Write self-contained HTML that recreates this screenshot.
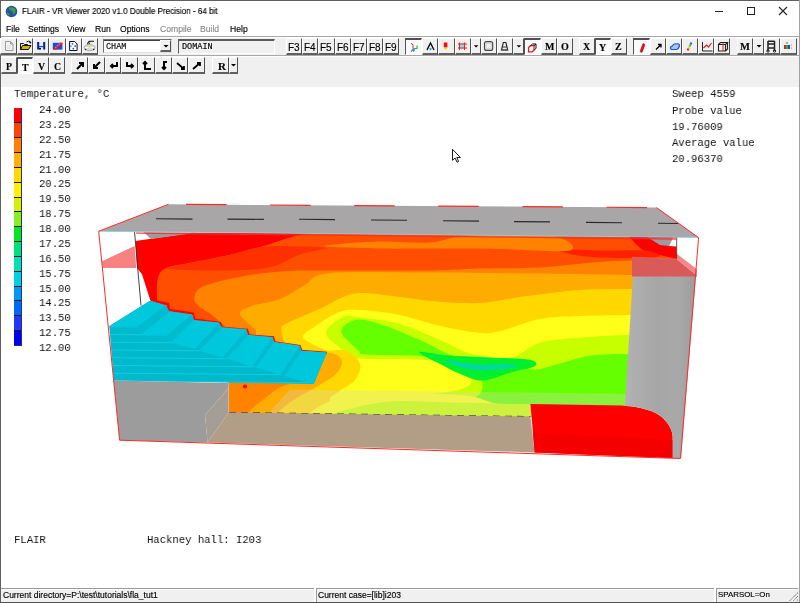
<!DOCTYPE html><html><head><meta charset="utf-8"><style>
*{margin:0;padding:0;box-sizing:border-box}
html,body{width:800px;height:603px;overflow:hidden;background:#fff}
body{position:relative;font-family:"Liberation Sans",sans-serif;font-size:8px;color:#000;-webkit-font-smoothing:antialiased}
.t,.m{will-change:transform}
.t{-webkit-text-stroke:.15px currentColor}
.a{position:absolute}
.t{position:absolute;white-space:pre;line-height:1}
.m{position:absolute;white-space:pre;font-family:"Liberation Mono",monospace;font-size:11.4px;line-height:1;color:#111;transform:scaleX(.93);transform-origin:0 0}
.b{position:absolute;background:#f0f0f0;border-left:1px solid #fff;border-top:1px solid #fff;border-right:1px solid #505050;border-bottom:2px solid #606060}
.bp{position:absolute;background:#fafafa;border-left:1px solid #505050;border-top:2px solid #505050;border-right:1px solid #fff;border-bottom:1px solid #fff}
.b svg,.bp svg{position:absolute;left:0;top:0}
.sf{font-family:"Liberation Serif",serif;font-weight:bold;font-size:10px}
</style></head><body>
<div class="a" style="left:0;top:0;width:800px;height:1px;background:#606060"></div>
<div class="a" style="left:0;top:0;width:1px;height:603px;background:#606060"></div>
<div class="a" style="left:799px;top:0;width:1px;height:603px;background:#a0a0a0"></div>
<svg class="a" style="left:5px;top:5px" width="13" height="13" viewBox="0 0 13 13"><circle cx="6.5" cy="6.5" r="5.8" fill="#2a4fa8"/><path d="M4 2.5 Q8 1.5 10.5 4 Q11 7 9 9.5 Q7 8 7.5 6 Q5 6 4 4Z" fill="#3aa33a"/><path d="M2 7 Q4 8 5 10.5 Q3 10.5 2 8.5Z" fill="#3aa33a"/></svg>
<div class="t" style="left:22px;top:6.6px;font-size:9px;transform:scaleX(.895);transform-origin:0 0;color:#000">FLAIR - VR Viewer 2020 v1.0 Double Precision - 64 bit</div>
<div class="a" style="left:715px;top:11px;width:8px;height:1px;background:#222"></div>
<div class="a" style="left:747px;top:7px;width:8px;height:8px;border:1px solid #222"></div>
<svg class="a" style="left:778px;top:6px" width="10" height="10"><path d="M1 1L9 9M9 1L1 9" stroke="#222" stroke-width="1.1"/></svg>
<div class="t" style="left:6.3px;top:25px;font-size:8.6px;color:#000">File</div>
<div class="t" style="left:27.8px;top:25px;font-size:8.6px;color:#000">Settings</div>
<div class="t" style="left:67.3px;top:25px;font-size:8.6px;color:#000">View</div>
<div class="t" style="left:94.8px;top:25px;font-size:8.6px;color:#000">Run</div>
<div class="t" style="left:119.8px;top:25px;font-size:8.6px;color:#000">Options</div>
<div class="t" style="left:159.8px;top:25px;font-size:8.6px;color:#8c8c8c">Compile</div>
<div class="t" style="left:200.3px;top:25px;font-size:8.6px;color:#8c8c8c">Build</div>
<div class="t" style="left:229.8px;top:25px;font-size:8.6px;color:#000">Help</div>
<div class="a" style="left:1px;top:36px;width:798px;height:51px;background:#f0f0f0"></div>
<div class="a" style="left:1px;top:36px;width:798px;height:1px;background:#a8a8a8"></div>
<div class="a" style="left:1px;top:37px;width:798px;height:1px;background:#fdfdfd"></div>
<div class="a" style="left:1px;top:55px;width:798px;height:1px;background:#a8a8a8"></div>
<div class="a" style="left:1px;top:56px;width:798px;height:1px;background:#fdfdfd"></div>
<div class="b" style="left:0px;top:38px;width:17px;height:17px"><svg width="16" height="14" style="left:0px;top:0px"><path d="M4.5 2.5h5l2.5 2.5v6.5h-7.5z" fill="#f4f4f4" stroke="#9a9a9a"/><path d="M9.5 2.5v2.5h2.5" fill="none" stroke="#9a9a9a"/><path d="M6 7h4M6 9h4" stroke="#dcdcdc"/></svg></div>
<div class="b" style="left:17px;top:38px;width:16px;height:17px"><svg width="16" height="14" style="left:0px;top:0px"><path d="M2.5 4.5h3l1 1h3v5h-7z" fill="#e8f090" stroke="#111"/><path d="M2.5 10.5l2-4h8.5l-2.5 4z" fill="#d0b810" stroke="#111"/><path d="M8.5 3q2-1.5 3.5-.5" fill="none" stroke="#111"/><circle cx="12.3" cy="3.6" r="1" fill="#111"/></svg></div>
<div class="b" style="left:33px;top:38px;width:16px;height:17px"><svg width="16" height="14" style="left:0px;top:0px"><path d="M4 3v7.5M10 3v7.5" stroke="#1040f0" stroke-width="2"/><path d="M4 3v7.5M10 3v7.5" stroke="#000" stroke-width=".6" transform="translate(.8 0)"/><path d="M5 7.6h4" stroke="#1040f0" stroke-width="1.2"/><path d="M5 9.8h2" stroke="#000" stroke-width="1.6"/></svg></div>
<div class="b" style="left:49px;top:38px;width:17px;height:17px"><svg width="16" height="14" style="left:0px;top:0px"><rect x="2.8" y="3.8" width="9.6" height="6.8" fill="#1848f0"/><path d="M2.8 10.6L9.5 3.8h2.9v1.5L6.8 10.6z" fill="#f01020"/><circle cx="7.5" cy="6.5" r=".8" fill="#40c0f0"/><circle cx="9.5" cy="5" r=".8" fill="#40c0f0"/><circle cx="5.8" cy="8.6" r=".8" fill="#40c0f0"/></svg></div>
<div class="b" style="left:66px;top:38px;width:16px;height:17px"><svg width="16" height="14" style="left:0px;top:0px"><path d="M2.6 2.5h5l2.5 2.5v6.5h-7.5z" fill="#fff" stroke="#111"/><circle cx="5.5" cy="4.8" r=".9" fill="#2060f0"/><circle cx="8.2" cy="7" r=".9" fill="#2060f0"/><circle cx="3.9" cy="7.2" r=".9" fill="#40a0f0"/><circle cx="6.3" cy="9.6" r=".9" fill="#2040e0"/></svg></div>
<div class="b" style="left:82px;top:38px;width:16px;height:17px"><svg width="16" height="14" style="left:0px;top:0px"><path d="M4.5 5.5q.5-3 2.5-3.3h4" fill="none" stroke="#111" stroke-width="1.1"/><path d="M6 5.5l.8-2" stroke="#333"/><ellipse cx="6.6" cy="8.6" rx="5.4" ry="3.1" fill="#d8d8d8" stroke="#9a9a9a" stroke-width=".8"/><path d="M2 8.6h9" stroke="#fff" stroke-width="1"/><rect x="5.8" y="7.8" width="1.6" height="1.4" fill="#f0e000"/><circle cx="2.5" cy="10.5" r=".8" fill="#222"/><circle cx="10.7" cy="10.5" r=".8" fill="#222"/></svg></div>
<div class="a" style="left:103px;top:39px;width:69px;height:14px;background:#fff;border-top:1px solid #707070;border-left:1px solid #707070;border-bottom:1px solid #e0e0e0;border-right:1px solid #e0e0e0"></div>
<div class="a" style="left:104px;top:40px;width:67px;height:1px;background:#404040"></div>
<div class="t" style="left:106px;top:42.5px;font-family:'Liberation Mono',monospace;font-size:8.5px">CHAM</div>
<div class="b" style="left:160px;top:40px;width:11px;height:12px"><svg width="10" height="10" style="left:0px;top:0px"><path d="M2.5 4h5l-2.5 2.5z" fill="#000"/></svg></div>
<div class="a" style="left:178px;top:39px;width:97px;height:15px;background:#f0f0f0;border-top:2px solid #5a5a5a;border-left:1px solid #5a5a5a;border-bottom:1px solid #fff;border-right:1px solid #fff"></div>
<div class="t" style="left:182px;top:42.5px;font-family:'Liberation Mono',monospace;font-size:8.5px">DOMAIN</div>
<div class="b" style="left:286px;top:38px;width:16px;height:17px"><div class="t" style="left:0.8px;top:3.5px;font-size:10px">F3</div></div>
<div class="b" style="left:302px;top:38px;width:16px;height:17px"><div class="t" style="left:0.8px;top:3.5px;font-size:10px">F4</div></div>
<div class="b" style="left:318px;top:38px;width:17px;height:17px"><div class="t" style="left:0.8px;top:3.5px;font-size:10px">F5</div></div>
<div class="b" style="left:335px;top:38px;width:16px;height:17px"><div class="t" style="left:0.8px;top:3.5px;font-size:10px">F6</div></div>
<div class="b" style="left:351px;top:38px;width:16px;height:17px"><div class="t" style="left:0.8px;top:3.5px;font-size:10px">F7</div></div>
<div class="b" style="left:367px;top:38px;width:16px;height:17px"><div class="t" style="left:0.8px;top:3.5px;font-size:10px">F8</div></div>
<div class="b" style="left:383px;top:38px;width:16px;height:17px"><div class="t" style="left:0.8px;top:3.5px;font-size:10px">F9</div></div>
<div class="bp" style="left:405px;top:38px;width:17px;height:17px"><svg width="16" height="14" style="left:0px;top:0px"><path d="M5 3.5q2 0 2 2v3" fill="none" stroke="#e02020"/><path d="M8 8.5h3v-3" fill="none" stroke="#20c020" stroke-width="1.2"/><path d="M8 8.5l-3 3M7 11.5l2-2" stroke="#4080e0" stroke-width="1.2"/></svg></div>
<div class="b" style="left:422px;top:38px;width:16px;height:17px"><svg width="16" height="14" style="left:0px;top:0px"><path d="M4 11L7.5 4L11 11" fill="none" stroke="#000" stroke-width="1.3"/><circle cx="7.5" cy="10" r="1.2" fill="#30b0e0"/></svg></div>
<div class="b" style="left:438px;top:38px;width:17px;height:17px"><svg width="16" height="14" style="left:0px;top:0px"><rect x="4.8" y="3.5" width="3.6" height="5" fill="#f01010"/><path d="M4.8 8.5h3.6l-.6 2h-2.4z" fill="#f0e010"/></svg></div>
<div class="b" style="left:455px;top:38px;width:16px;height:17px"><svg width="16" height="14" style="left:0px;top:0px"><rect x="3" y="4.5" width="6" height="5" fill="#70e8f8"/><path d="M2 5h9M2 9h9M3.5 3.5v7.5M8.5 3.5v7.5" stroke="#f02020" stroke-width="1.1"/></svg></div>
<div class="b" style="left:471px;top:38px;width:10px;height:17px"><svg width="11" height="14" style="left:0px;top:0px"><path d="M1.8 6.3h4.6l-2.3 2.3z" fill="#000"/></svg></div>
<div class="b" style="left:481px;top:38px;width:16px;height:17px"><svg width="15" height="14" style="left:0px;top:0px"><rect x="2.5" y="2.6" width="8.2" height="8.8" rx="2" fill="none" stroke="#444" stroke-width="1.1"/><rect x="4" y="4.2" width="5.2" height="5.6" fill="none" stroke="#bbb" stroke-width=".6"/></svg></div>
<div class="b" style="left:497px;top:38px;width:16px;height:17px"><svg width="16" height="14" style="left:0px;top:0px"><path d="M3.5 11L5.3 3.5h2.6l1.8 7.5z" fill="none" stroke="#222" stroke-width="1.1"/><path d="M4.3 8h4.6" stroke="#222" stroke-width=".9"/><path d="M3.3 11h6.6" stroke="#555" stroke-width="1.2"/></svg></div>
<div class="b" style="left:513px;top:38px;width:11px;height:17px"><svg width="11" height="14" style="left:0px;top:0px"><path d="M2.6 6.3h4.6l-2.3 2.3z" fill="#000"/></svg></div>
<div class="bp" style="left:524px;top:38px;width:17px;height:17px"><svg width="16" height="14" style="left:0px;top:0px"><path d="M3.5 7.5l2-1.8h3.5v4.5l-2 1.6H3.5z" fill="none" stroke="#e01818" stroke-width="1.2"/><path d="M5.5 5.7l2-1.7h3.5v4.4l-2 1.8M9 5.7l2-1.7" fill="none" stroke="#111" stroke-width="1"/></svg></div>
<div class="b" style="left:541px;top:38px;width:16px;height:17px"><div class="t sf" style="left:3px;top:3px">M</div></div>
<div class="b" style="left:557px;top:38px;width:16px;height:17px"><div class="t sf" style="left:3px;top:3px">O</div></div>
<div class="b" style="left:579px;top:38px;width:16px;height:17px"><div class="t sf" style="left:3px;top:3px">X</div></div>
<div class="bp" style="left:595px;top:38px;width:16px;height:17px"><div class="t sf" style="left:3px;top:3px">Y</div></div>
<div class="b" style="left:611px;top:38px;width:16px;height:17px"><div class="t sf" style="left:3px;top:3px">Z</div></div>
<div class="bp" style="left:633px;top:38px;width:17px;height:17px"><svg width="16" height="14" style="left:0px;top:0px"><path d="M6 11.5L9 3.5l2 1-3 8z" fill="#e81010" stroke="#900" stroke-width=".5"/></svg></div>
<div class="b" style="left:650px;top:38px;width:16px;height:17px"><svg width="16" height="14" style="left:0px;top:0px"><path d="M5 10.5l5-5M7 5.5h3v3" fill="none" stroke="#000" stroke-width="1.3"/></svg></div>
<div class="b" style="left:666px;top:38px;width:16px;height:17px"><svg width="16" height="14" style="left:0px;top:0px"><path d="M3.5 9q0-2 2-2 1-3 4-2 3-1 3 2-1 3-3 3.5h-5q-1 0-1-1.5z" fill="#a0c8f0" stroke="#2050d0" stroke-width="1.2"/></svg></div>
<div class="b" style="left:682px;top:38px;width:16px;height:17px"><svg width="16" height="14" style="left:0px;top:0px"><path d="M8.5 3.5l-1 2" stroke="#2060f0" stroke-width="2"/><path d="M7.5 5.5l-1 2" stroke="#40c040" stroke-width="2"/><path d="M6.5 7.5l-1 2" stroke="#f0e000" stroke-width="2"/><path d="M5.5 9.5l-1 2" stroke="#f02020" stroke-width="2"/></svg></div>
<div class="b" style="left:698px;top:38px;width:16px;height:17px"><svg width="16" height="14" style="left:0px;top:0px"><path d="M3.5 3v9h10" fill="none" stroke="#222"/><path d="M4.5 9l3-3 2 2 3-4" fill="none" stroke="#e02020" stroke-width="1.2"/></svg></div>
<div class="b" style="left:714px;top:38px;width:16px;height:17px"><svg width="16" height="14" style="left:0px;top:0px"><path d="M3.5 5.5h7v6.5h-7z M3.5 5.5l2-2h7l-2 2 M10.5 12l2-2v-6.5" fill="none" stroke="#222" stroke-width="1.1"/><path d="M8 4v8" stroke="#e02020"/></svg></div>
<div class="b" style="left:737px;top:38px;width:16px;height:17px"><div class="t sf" style="left:1.5px;top:3px;font-size:10.5px">M</div></div>
<div class="b" style="left:753px;top:38px;width:11px;height:17px"><svg width="11" height="14" style="left:0px;top:0px"><path d="M2.5 6h5l-2.5 2.5z" fill="#000"/></svg></div>
<div class="b" style="left:764px;top:38px;width:16px;height:17px"><svg width="16" height="14" style="left:0px;top:0px"><path d="M3 2v10M9.5 2v10M3 5h6.5M3 9h6.5M3 2.2h6.5" stroke="#222" stroke-width="1.5"/><circle cx="3" cy="12" r="1.2" fill="none" stroke="#222"/><circle cx="9.5" cy="12" r="1.2" fill="none" stroke="#222"/></svg></div>
<div class="b" style="left:780px;top:38px;width:17px;height:17px"><svg width="16" height="14" style="left:0px;top:0px"><rect x="3" y="6" width="2" height="4" fill="#e02020"/><rect x="5" y="6" width="2" height="4" fill="#20c020"/><rect x="7" y="6" width="2" height="4" fill="#2040e0"/><circle cx="6" cy="4" r=".9" fill="#888"/><circle cx="10.5" cy="6" r=".6" fill="#888"/><circle cx="10.5" cy="9" r=".6" fill="#888"/></svg></div>
<div class="b" style="left:1px;top:57px;width:16px;height:17px"><div class="t sf" style="left:3.5px;top:4px;font-size:9.8px">P</div></div>
<div class="bp" style="left:17px;top:57px;width:16px;height:17px"><div class="t sf" style="left:3.5px;top:4px;font-size:9.8px">T</div></div>
<div class="b" style="left:33px;top:57px;width:16px;height:17px"><div class="t sf" style="left:3.5px;top:4px;font-size:9.8px">V</div></div>
<div class="b" style="left:49px;top:57px;width:16px;height:17px"><div class="t sf" style="left:3.5px;top:4px;font-size:9.8px">C</div></div>
<div class="b" style="left:71px;top:57px;width:17px;height:17px"><svg width="16" height="14" style="left:0px;top:0px"><path d="M5 11l5-5M7 5h4v4" fill="none" stroke="#000" stroke-width="2"/></svg></div>
<div class="b" style="left:88px;top:57px;width:17px;height:17px"><svg width="16" height="14" style="left:0px;top:0px"><path d="M11 4l-5 5M5 6v4h4" fill="none" stroke="#000" stroke-width="2"/></svg></div>
<div class="b" style="left:105px;top:57px;width:16px;height:17px"><svg width="16" height="14" style="left:0px;top:0px"><path d="M11 4v4H5M7 6l-2 2 2 2" fill="none" stroke="#000" stroke-width="2"/></svg></div>
<div class="b" style="left:121px;top:57px;width:17px;height:17px"><svg width="16" height="14" style="left:0px;top:0px"><path d="M5 4v4h6M9 6l2 2-2 2" fill="none" stroke="#000" stroke-width="2"/></svg></div>
<div class="b" style="left:138px;top:57px;width:17px;height:17px"><svg width="16" height="14" style="left:0px;top:0px"><path d="M6 4v7h6M4 6l2-2 2 2" fill="none" stroke="#000" stroke-width="2"/></svg></div>
<div class="b" style="left:155px;top:57px;width:17px;height:17px"><svg width="16" height="14" style="left:0px;top:0px"><path d="M11 4H8v7M6 9l2 2 2-2" fill="none" stroke="#000" stroke-width="2"/></svg></div>
<div class="b" style="left:172px;top:57px;width:16px;height:17px"><svg width="16" height="14" style="left:0px;top:0px"><path d="M4 5l7 6M11 8v3H8" fill="none" stroke="#000" stroke-width="1.8"/></svg></div>
<div class="b" style="left:188px;top:57px;width:17px;height:17px"><svg width="16" height="14" style="left:0px;top:0px"><path d="M4 11l7-6M8 5h3v3" fill="none" stroke="#000" stroke-width="1.8"/></svg></div>
<div class="b" style="left:212px;top:57px;width:17px;height:17px"><div class="t sf" style="left:5px;top:3px;font-size:11px">R</div></div>
<div class="b" style="left:229px;top:57px;width:9px;height:17px"><svg width="8" height="14" style="left:0px;top:0px"><path d="M1 6h5l-2.5 2.5z" fill="#000"/></svg></div>
<div class="a" style="left:1px;top:87px;width:798px;height:501px;background:#fff"></div>
<svg class="a" style="left:0;top:0" width="800" height="603" viewBox="0 0 800 603"><defs><clipPath id="face"><path d="M135.5 241 L192 232.7 L300 233 L677 236.5 L677 259 L633 257 L633 407 L530.4 416.6 L229 412.5 L229 383 L150.2 300 L142 274.3 L137 268 Z"/></clipPath><pattern id="dots" width="2" height="2" patternUnits="userSpaceOnUse"><rect width="2" height="2" fill="#aa9c8a"/><rect width="1" height="1" fill="#9c9c9c"/><rect x="1" y="1" width="1" height="1" fill="#a4a0a0"/></pattern></defs><path d="M101.9 261.2 L134.6 246 L136.2 267.5 L102.5 267.5 Z" fill="#f88282" /><path d="M102.5 267.3 L136 267.3" stroke="#e86060" stroke-width=".7"/><g clip-path="url(#face)"><rect x="130" y="225" width="560" height="200" fill="#ff0000"/><path d="M157.0 297.0 C157.0 294.8 156.5 288.0 157.0 284.0 C157.5 280.0 158.2 275.8 160.0 273.0 C161.8 270.2 163.2 269.0 167.5 267.4 C171.8 265.8 176.6 265.5 186.0 263.6 C195.4 261.7 211.5 258.8 224.0 256.0 C236.5 253.2 250.8 249.6 261.0 246.8 C271.2 244.0 278.5 241.0 285.0 239.0 C291.5 237.0 294.2 236.2 300.0 235.0 C305.8 233.8 316.7 232.5 320.0 232.0 L690.0 230.0 L690.0 425.0 L157.0 425.0 Z" fill="#ff4e00" /><path d="M167.0 268.5 C164.7 267.4 176.5 266.0 186.0 264.0 C195.5 262.0 211.5 259.3 224.0 256.5 C236.5 253.7 248.3 248.7 261.0 247.0 C273.7 245.3 289.2 246.3 300.0 246.5 C310.8 246.7 326.0 246.7 326.0 248.0 C326.0 249.3 308.3 251.6 300.0 254.5 C291.7 257.4 284.3 262.9 276.0 265.5 C267.7 268.1 262.7 269.0 250.0 269.8 C237.3 270.6 213.8 270.7 200.0 270.5 C186.2 270.3 169.3 269.6 167.0 268.5 Z" fill="#ff3000" /><path d="M628.5 236.0 L680.0 236.0 L680.0 259.5 L680.0 259.5 C676.7 258.8 666.1 256.5 660.0 255.0 C653.9 253.5 648.9 253.8 643.6 250.6 C638.4 247.4 631.0 238.4 628.5 236.0 Z" fill="#ff0000" /><path d="M560.0 249.5 C564.2 248.8 586.0 250.3 600.0 250.5 C614.0 250.7 634.0 249.7 644.0 250.6 C654.0 251.5 660.7 254.8 660.0 256.0 C659.3 257.2 650.0 257.8 640.0 258.0 C630.0 258.2 610.8 258.0 600.0 257.5 C589.2 257.0 581.7 256.3 575.0 255.0 C568.3 253.7 555.8 250.2 560.0 249.5 Z" fill="#ff2000" /><path d="M330.0 245.0 C338.3 244.1 363.3 241.9 380.0 241.5 C396.7 241.1 415.5 243.4 430.0 242.5 C444.5 241.6 446.7 237.1 467.0 236.0 C487.3 234.9 534.8 233.6 552.0 236.0 C569.2 238.4 578.7 248.3 570.0 250.5 C561.3 252.7 523.3 249.3 500.0 249.0 C476.7 248.7 450.0 248.7 430.0 248.6 C410.0 248.5 396.7 248.8 380.0 248.5 C363.3 248.2 338.3 247.6 330.0 247.0 C321.7 246.4 321.7 245.9 330.0 245.0 Z" fill="#ff8200" /><path d="M229.0 330.0 C226.2 327.6 217.8 319.7 212.5 315.5 C207.2 311.3 200.5 308.2 197.5 305.0 C194.5 301.8 193.2 299.2 194.5 296.0 C195.8 292.8 195.8 289.0 205.0 285.5 C214.2 282.0 235.8 277.4 250.0 275.0 C264.2 272.6 276.7 271.8 290.0 271.0 C303.3 270.2 306.7 270.6 330.0 270.5 C353.3 270.4 405.0 270.8 430.0 270.5 C455.0 270.2 461.7 269.0 480.0 268.5 C498.3 268.0 520.3 268.6 540.0 267.5 C559.7 266.4 581.3 263.2 598.0 262.0 C614.7 260.8 633.0 260.3 640.0 260.0 L640.0 425.0 L229.0 425.0 Z" fill="#ff8200" /><path d="M256.0 330.0 C253.3 327.3 240.7 318.0 240.0 314.0 C239.3 310.0 245.3 308.5 252.0 306.0 C258.7 303.5 271.2 302.5 280.0 299.0 C288.8 295.5 296.7 289.3 305.0 285.0 C313.3 280.7 309.2 275.1 330.0 273.0 C350.8 270.9 395.0 272.4 430.0 272.5 C465.0 272.6 506.2 273.1 540.0 273.5 C573.8 273.9 615.5 274.8 633.0 275.0 C650.5 275.2 643.0 275.0 645.0 275.0 L645.0 425.0 L256.0 425.0 Z" fill="#ffac00" /><path d="M300.0 346.0 C297.6 345.4 288.7 345.4 285.6 342.7 C282.5 340.0 281.6 332.9 281.6 329.8 C281.6 326.7 279.3 327.4 285.6 323.9 C291.9 320.4 307.8 314.1 319.4 309.0 C331.0 303.9 341.6 295.5 355.0 293.5 C368.4 291.5 387.5 295.8 400.0 297.0 C412.5 298.2 416.7 300.0 430.0 301.0 C443.3 302.0 465.0 303.7 480.0 303.0 C495.0 302.3 503.3 299.2 520.0 297.0 C536.7 294.8 561.2 291.3 580.0 290.0 C598.8 288.7 622.2 289.2 633.0 289.0 C643.8 288.8 643.0 289.0 645.0 289.0 L645.0 425.0 L300.0 425.0 Z" fill="#ffd800" /><path d="M330.0 352.0 C325.6 349.7 305.9 342.3 303.5 338.0 C301.1 333.7 309.7 330.3 315.6 326.0 C321.5 321.7 331.6 314.7 339.0 312.0 C346.4 309.3 349.9 309.5 360.0 310.0 C370.1 310.5 386.6 312.3 399.8 314.9 C413.1 317.5 426.2 322.8 439.5 325.8 C452.8 328.8 469.2 331.9 479.3 332.8 C489.4 333.7 489.9 333.3 500.0 331.0 C510.1 328.7 526.5 321.4 539.8 318.9 C553.0 316.4 564.6 316.6 579.5 315.9 C594.4 315.2 618.3 315.1 629.2 314.9 C640.1 314.7 642.4 314.9 645.0 314.9 L645.0 425.0 L330.0 425.0 Z" fill="#ffff1a" /><path d="M345.0 352.0 C341.8 348.8 326.3 338.8 326.0 333.0 C325.7 327.2 337.6 319.6 343.3 317.0 C349.0 314.4 350.6 316.4 360.0 317.5 C369.4 318.6 386.6 320.2 399.8 323.9 C413.1 327.6 427.6 334.8 439.5 339.8 C451.4 344.8 459.6 350.7 471.3 353.7 C483.1 356.7 498.6 359.5 510.0 357.7 C521.4 355.9 528.2 346.0 539.8 342.7 C551.4 339.4 564.6 339.1 579.5 337.8 C594.4 336.5 618.3 335.3 629.2 334.8 C640.1 334.3 642.4 334.8 645.0 334.8 L645.0 425.0 L345.0 425.0 Z" fill="#c8ff00" /><path d="M360.0 352.0 C356.9 348.7 342.1 337.3 341.3 332.0 C340.5 326.7 348.8 321.3 355.2 320.0 C361.6 318.7 369.3 320.7 380.0 324.0 C390.7 327.3 406.4 334.2 419.6 339.8 C432.8 345.4 444.3 354.1 459.4 357.7 C474.5 361.3 497.6 359.6 510.0 361.6 C522.4 363.6 525.5 369.3 533.8 369.6 C542.1 369.9 550.3 365.9 559.6 363.6 C568.9 361.3 577.9 357.4 589.5 355.7 C601.1 354.0 620.0 354.1 629.2 353.7 C638.5 353.3 642.4 353.5 645.0 353.5 L645.0 425.0 L360.0 425.0 Z" fill="#66ff00" /><path d="M344.0 346.0 C347.0 343.0 347.5 352.3 360.0 354.0 C372.5 355.7 402.3 354.7 419.0 356.0 C435.7 357.3 450.1 358.7 460.0 362.0 C469.9 365.3 474.8 371.3 478.5 376.0 C482.2 380.7 483.4 386.2 482.0 390.0 C480.6 393.8 477.0 397.8 470.0 399.0 C463.0 400.2 451.7 397.7 440.0 397.0 C428.3 396.3 412.5 395.5 400.0 395.0 C387.5 394.5 374.7 397.8 365.0 394.0 C355.3 390.2 345.5 380.0 342.0 372.0 C338.5 364.0 341.0 349.0 344.0 346.0 Z" fill="#c8ff00" /><path d="M340.0 350.0 C343.5 349.7 343.8 356.7 357.0 358.3 C370.2 359.9 402.3 358.3 419.0 359.5 C435.7 360.7 448.5 362.8 457.0 365.5 C465.5 368.2 468.2 372.2 470.0 375.6 C471.8 379.0 473.0 383.1 468.0 386.0 C463.0 388.9 457.2 391.2 440.0 393.0 C422.8 394.8 382.5 395.7 365.0 397.0 C347.5 398.3 340.5 404.2 335.0 401.0 C329.5 397.8 331.8 384.8 332.0 378.0 C332.2 371.2 334.7 364.7 336.0 360.0 C337.3 355.3 336.5 350.3 340.0 350.0 Z" fill="#ffff1a" /><path d="M419.0 352.0 C420.4 350.6 436.7 354.6 448.7 355.5 C460.7 356.4 477.5 356.9 491.0 357.6 C504.5 358.3 522.2 358.3 529.5 359.7 C536.8 361.1 537.8 363.9 535.0 366.0 C532.2 368.1 521.2 369.6 512.5 372.0 C503.8 374.4 491.2 380.1 482.7 380.5 C474.2 380.9 468.6 377.2 461.5 374.5 C454.4 371.8 447.1 367.8 440.0 364.0 C432.9 360.2 417.6 353.4 419.0 352.0 Z" fill="#00f030" /><path d="M444.5 360.0 C445.9 359.2 466.5 363.8 478.5 364.5 C490.5 365.2 512.5 363.8 516.7 364.5 C521.0 365.2 511.8 368.2 504.0 369.0 C496.2 369.8 479.9 371.0 470.0 369.5 C460.1 368.0 443.1 360.8 444.5 360.0 Z" fill="#00d8a0" /><path d="M229.0 380.0 L326.0 351.0 L326.0 351.0 C329.5 351.0 341.3 348.8 347.0 351.0 C352.7 353.2 358.7 359.2 360.0 364.0 C361.3 368.8 358.7 375.3 355.0 380.0 C351.3 384.7 343.5 388.0 338.0 392.0 C332.5 396.0 325.5 400.3 322.0 404.0 C318.5 407.7 317.8 412.3 317.0 414.0 L229.0 414.0 Z" fill="#ffd800" /><path d="M229.0 380.0 L326.0 352.0 L326.0 352.0 C327.8 352.5 334.3 353.3 337.0 355.0 C339.7 356.7 342.2 358.8 342.0 362.0 C341.8 365.2 340.0 370.0 336.0 374.0 C332.0 378.0 325.3 381.5 318.0 386.0 C310.7 390.5 299.0 396.3 292.0 401.0 C285.0 405.7 278.7 411.8 276.0 414.0 L229.0 414.0 Z" fill="#ffac00" /><path d="M229.0 380.0 L290.0 384.0 L290.0 384.0 C288.2 384.7 283.2 385.7 279.0 388.0 C274.8 390.3 269.2 394.8 265.0 398.0 C260.8 401.2 257.0 404.3 254.0 407.0 C251.0 409.7 248.2 412.8 247.0 414.0 L229.0 414.0 Z" fill="#ff8200" /><path d="M300.0 420.0 C303.7 417.5 314.5 409.0 322.0 405.0 C329.5 401.0 335.3 398.1 345.0 396.0 C354.7 393.9 364.2 392.8 380.0 392.5 C395.8 392.2 425.0 393.4 440.0 394.0 C455.0 394.6 461.7 394.7 470.0 396.0 C478.3 397.3 484.2 400.3 490.0 402.0 C495.8 403.7 502.5 405.3 505.0 406.0 L505.0 420.0 L300.0 420.0 Z" fill="#ffff1a" /><path d="M322.0 418.0 C325.8 416.7 333.7 412.8 345.0 410.0 C356.3 407.2 372.5 402.8 390.0 401.5 C407.5 400.2 435.0 402.2 450.0 402.5 C465.0 402.8 470.0 402.8 480.0 403.0 C490.0 403.2 500.0 403.8 510.0 404.0 C520.0 404.2 535.0 404.0 540.0 404.0 L540.0 420.0 L322.0 420.0 Z" fill="#c8ff00" /><path d="M150 300 L168 304 L169 310 L193 313.5 L194 319.5 L220 323 L222 328 L247 330 L248.5 335.5 L273 337.5 L274.5 342.5 L299.5 346 L301.5 351 L327 353" stroke="#ff0000" stroke-width="2.4" fill="none"/><path d="M290 389.5 L633 394 L633 420 L262 420 Z" fill="#d8d8c0" fill-opacity=".32"/></g><ellipse cx="245" cy="386.5" rx="2.2" ry="2" fill="#f01010"/><circle cx="167.5" cy="310.5" r="1" fill="#ff5020"/><circle cx="192.5" cy="316" r="1" fill="#ff5020"/><path d="M229 412.5 L530.4 416.6" stroke="#303030" stroke-width="1.1" stroke-dasharray="7 5"/><path d="M134.5 231.5 L141 305.5" stroke="#303030" stroke-width=".9"/><path d="M98.7 231.2 L168.5 204.3 L656.5 207.6 L698.6 237.6 Z" fill="#a8a6a6" /><path d="M98.7 231.3 L698.6 237.4" stroke="#88d0dc" stroke-width=".9"/><path d="M156 218.8 L192.5 219.10000000000002" stroke="#2a2a2a" stroke-width="1.1"/><path d="M227.5 219.1 L263.8 219.4" stroke="#2a2a2a" stroke-width="1.1"/><path d="M299 219.3 L335 219.60000000000002" stroke="#2a2a2a" stroke-width="1.1"/><path d="M371 220 L407 220.3" stroke="#2a2a2a" stroke-width="1.1"/><path d="M443 220.8 L479 221.10000000000002" stroke="#2a2a2a" stroke-width="1.1"/><path d="M514 221.6 L550 221.9" stroke="#2a2a2a" stroke-width="1.1"/><path d="M586 222.4 L622 222.70000000000002" stroke="#2a2a2a" stroke-width="1.1"/><path d="M658 223.2 L678 223.5" stroke="#2a2a2a" stroke-width="1.1"/><path d="M143.5 232.3 L196 232.8 L151 239 Z" fill="#9c9c9c" /><path d="M648 237.5 L673 237.8 L669 246 L660 245 Z" fill="#9c9c9c" /><path d="M669 246 L673 237.8 L676.7 238 L676.7 246.5 Z" fill="#ffffff" /><path d="M150.2 300.5 L166 305.5 L169 311 L192 314.5 L194 320 L219 322.5 L222 327.5 L246.4 329 L248.2 335 L272.7 337 L274.4 342 L299.8 345.5 L301.6 350.8 L327 352.5 L313.8 384 L113.7 380.5 L109.3 326 Z" fill="#00b9cd" /><clipPath id="stc"><path d="M150.2 300.5 L166 305.5 L169 311 L192 314.5 L194 320 L219 322.5 L222 327.5 L246.4 329 L248.2 335 L272.7 337 L274.4 342 L299.8 345.5 L301.6 350.8 L327 352.5 L313.8 384 L113.7 380.5 L109.3 326 Z"/></clipPath><g clip-path="url(#stc)"><path d="M100 326.6 L330 328.6" stroke="#12cde0" stroke-width="1"/><path d="M100 334.4 L330 336.4" stroke="#12cde0" stroke-width="1"/><path d="M100 342.1 L330 344.1" stroke="#12cde0" stroke-width="1"/><path d="M100 349.9 L330 351.9" stroke="#12cde0" stroke-width="1"/><path d="M100 357.6 L330 359.6" stroke="#12cde0" stroke-width="1"/><path d="M100 365.4 L330 367.4" stroke="#12cde0" stroke-width="1"/><path d="M100 373.1 L330 375.1" stroke="#12cde0" stroke-width="1"/><path d="M100 380.9 L330 382.9" stroke="#12cde0" stroke-width="1"/><path d="M109.3 326 L150.2 300.5 L166 305.5 L136.5 327.5 Z" fill="#00c8dc" /><path d="M141 334.2 L169.5 311.5 L192 314.5 L166.5 335.7 Z" fill="#00c8dc" /><path d="M171 342.5 L194 320 L219 322.5 L195 349 Z" fill="#00c8dc" /><path d="M199 350.5 L222 327.5 L246.4 329.8 L222.8 357.8 Z" fill="#00c8dc" /><path d="M226 358.5 L248.2 335 L272.7 337.5 L252.5 366.5 Z" fill="#00c8dc" /><path d="M256 367 L274.4 342 L299.8 346 L280.5 375.3 Z" fill="#00c8dc" /><path d="M284 376 L301.6 350.8 L327 352.5 L313.8 384 Z" fill="#00c8dc" /><path d="M136.5 327.5 L166 305.5 L169.5 311.5 L141 334.2 Z" fill="#00bbcf" /><path d="M166.5 335.7 L192 314.5 L194 320 L171 342.5 Z" fill="#00bbcf" /><path d="M195 349 L219 322.5 L222 327.5 L199 350.5 Z" fill="#00bbcf" /><path d="M222.8 357.8 L246.4 329.8 L248.2 335 L226 358.5 Z" fill="#00bbcf" /><path d="M252.5 366.5 L272.7 337.5 L274.4 342 L256 367 Z" fill="#00bbcf" /><path d="M280.5 375.3 L299.8 346 L301.6 350.8 L284 376 Z" fill="#00bbcf" /></g><path d="M113.7 380.5 L228.7 383 L228.7 388 L205 415 L207.5 442.5 L119.6 440.2 Z" fill="#9c9c9c" /><path d="M205 415 L228.7 388 L228.7 412.5 L207.5 442.5 Z" fill="url(#dots)" /><path d="M207.5 442.5 L228.7 412.5 L530.4 416.6 L534.7 452.4 Z" fill="#b29e86" /><path d="M530.4 404 L622 405.5 C642 407 655 411 663 418 C669 424 672 430 672.7 436 L672.7 458 L534.7 452.4 Z" fill="#ff0000" /><path d="M533 433 L672.7 440 L672.7 458 L534.7 452.4 Z" fill="#f40000" /><linearGradient id="colg" x1="625" y1="0" x2="696" y2="0" gradientUnits="userSpaceOnUse"><stop offset="0" stop-color="#b2b2b2"/><stop offset=".45" stop-color="#a6a6a6"/><stop offset=".75" stop-color="#a9a9a9"/><stop offset="1" stop-color="#9c9c9c"/></linearGradient><path d="M632.9 276 L696 276 L681 458 L672.7 458 L672.7 436 C672 430 669 424 663 418 C655 411 642 407 622 405.5 L624.8 405.5 Z" fill="url(#colg)" /><path d="M632 256.8 L676.7 259 L697 275.4 L697 276.5 L632 276.5 Z" fill="#da5a5a" /><path d="M676.7 253.5 L676.7 259 L697 275.4 L697 269 Z" fill="#f48888" /><path d="M676.7 238 L697 238.5 L697 269 L676.7 253.5 Z" fill="#ffffff" /><path d="M676.7 238 L676.7 258.5" stroke="#444" stroke-width=".8"/><g stroke="#ff2a2a" stroke-width="1" fill="none"><path d="M98.7 231.2 L119.6 440.2 L680.5 458.5 L698.6 237.6"/><path d="M98.7 231.2 L168.5 204.3 M656.5 207.6 L698.6 237.6"/><path d="M136 233.2 L676 239" stroke-width="1.3" opacity=".85"/><path d="M186 204.45 L656.5 207.6" stroke-width="1.2" stroke-dasharray="40.5 43.6"/></g></svg>
<div class="m" style="left:14px;top:89px">Temperature, °C</div>
<div class="a" style="left:13.5px;top:107.5px;width:8px;height:238.4px;background:#303078"></div>
<div class="a" style="left:14.2px;top:108.00px;width:6.6px;height:14.84px;background:#ff0000"></div>
<div class="a" style="left:14.2px;top:122.84px;width:6.6px;height:14.84px;background:#ff4400"></div>
<div class="a" style="left:14.2px;top:137.68px;width:6.6px;height:14.84px;background:#ff8000"></div>
<div class="a" style="left:14.2px;top:152.52px;width:6.6px;height:14.84px;background:#ffb000"></div>
<div class="a" style="left:14.2px;top:167.36px;width:6.6px;height:14.84px;background:#ffd800"></div>
<div class="a" style="left:14.2px;top:182.20px;width:6.6px;height:14.84px;background:#fff000"></div>
<div class="a" style="left:14.2px;top:197.04px;width:6.6px;height:14.84px;background:#d8f000"></div>
<div class="a" style="left:14.2px;top:211.88px;width:6.6px;height:14.84px;background:#88f020"></div>
<div class="a" style="left:14.2px;top:226.72px;width:6.6px;height:14.84px;background:#00e820"></div>
<div class="a" style="left:14.2px;top:241.56px;width:6.6px;height:14.84px;background:#00e078"></div>
<div class="a" style="left:14.2px;top:256.40px;width:6.6px;height:14.84px;background:#00e0b0"></div>
<div class="a" style="left:14.2px;top:271.24px;width:6.6px;height:14.84px;background:#00d0e0"></div>
<div class="a" style="left:14.2px;top:286.08px;width:6.6px;height:14.84px;background:#0098f0"></div>
<div class="a" style="left:14.2px;top:300.92px;width:6.6px;height:14.84px;background:#0068f8"></div>
<div class="a" style="left:14.2px;top:315.76px;width:6.6px;height:14.84px;background:#2038f8"></div>
<div class="a" style="left:14.2px;top:330.60px;width:6.6px;height:14.84px;background:#0000f0"></div>
<div class="a" style="left:14.2px;top:122.34px;width:6.6px;height:1px;background:#1a1a1a"></div>
<div class="a" style="left:14.2px;top:137.18px;width:6.6px;height:1px;background:#1a1a1a"></div>
<div class="a" style="left:14.2px;top:152.02px;width:6.6px;height:1px;background:#1a1a1a"></div>
<div class="a" style="left:14.2px;top:166.86px;width:6.6px;height:1px;background:#1a1a1a"></div>
<div class="a" style="left:14.2px;top:181.70px;width:6.6px;height:1px;background:#1a1a1a"></div>
<div class="a" style="left:14.2px;top:196.54px;width:6.6px;height:1px;background:#1a1a1a"></div>
<div class="a" style="left:14.2px;top:211.38px;width:6.6px;height:1px;background:#1a1a1a"></div>
<div class="a" style="left:14.2px;top:226.22px;width:6.6px;height:1px;background:#1a1a1a"></div>
<div class="a" style="left:14.2px;top:241.06px;width:6.6px;height:1px;background:#1a1a1a"></div>
<div class="a" style="left:14.2px;top:255.90px;width:6.6px;height:1px;background:#1a1a1a"></div>
<div class="a" style="left:14.2px;top:270.74px;width:6.6px;height:1px;background:#1a1a1a"></div>
<div class="a" style="left:14.2px;top:285.58px;width:6.6px;height:1px;background:#1a1a1a"></div>
<div class="a" style="left:14.2px;top:300.42px;width:6.6px;height:1px;background:#1a1a1a"></div>
<div class="a" style="left:14.2px;top:315.26px;width:6.6px;height:1px;background:#1a1a1a"></div>
<div class="a" style="left:14.2px;top:330.10px;width:6.6px;height:1px;background:#1a1a1a"></div>
<div class="m" style="left:38.5px;top:105.0px">24.00</div>
<div class="m" style="left:38.5px;top:119.9px">23.25</div>
<div class="m" style="left:38.5px;top:134.8px">22.50</div>
<div class="m" style="left:38.5px;top:149.6px">21.75</div>
<div class="m" style="left:38.5px;top:164.5px">21.00</div>
<div class="m" style="left:38.5px;top:179.4px">20.25</div>
<div class="m" style="left:38.5px;top:194.2px">19.50</div>
<div class="m" style="left:38.5px;top:209.1px">18.75</div>
<div class="m" style="left:38.5px;top:224.0px">18.00</div>
<div class="m" style="left:38.5px;top:238.9px">17.25</div>
<div class="m" style="left:38.5px;top:253.8px">16.50</div>
<div class="m" style="left:38.5px;top:268.6px">15.75</div>
<div class="m" style="left:38.5px;top:283.5px">15.00</div>
<div class="m" style="left:38.5px;top:298.4px">14.25</div>
<div class="m" style="left:38.5px;top:313.2px">13.50</div>
<div class="m" style="left:38.5px;top:328.1px">12.75</div>
<div class="m" style="left:38.5px;top:343.0px">12.00</div>
<div class="m" style="left:671.5px;top:89px">Sweep 4559</div>
<div class="m" style="left:671.5px;top:105.5px">Probe value</div>
<div class="m" style="left:671.5px;top:121.5px">19.76009</div>
<div class="m" style="left:671.5px;top:138px">Average value</div>
<div class="m" style="left:671.5px;top:154px">20.96370</div>
<div class="m" style="left:14px;top:535px">FLAIR</div>
<div class="m" style="left:147px;top:535px">Hackney hall: I203</div>
<svg class="a" style="left:451px;top:148px" width="12" height="16"><path d="M1.5 1.3v11l2.6-2.3 1.9 4.2 1.6-.7-1.8-4h3.6z" fill="#fff" stroke="#000" stroke-width=".9" stroke-linejoin="round"/></svg>
<div class="a" style="left:1px;top:587.5px;width:798px;height:15.5px;background:#f0f0f0"></div>
<div class="a" style="left:1px;top:587.6px;width:313px;height:1px;background:#9a9a9a"></div>
<div class="a" style="left:1px;top:588.6px;width:313px;height:1px;background:#fcfcfc"></div>
<div class="a" style="left:316px;top:587.6px;width:397.5px;height:1px;background:#9a9a9a"></div>
<div class="a" style="left:316px;top:588.6px;width:397.5px;height:1px;background:#fcfcfc"></div>
<div class="a" style="left:715.5px;top:587.6px;width:82.5px;height:1px;background:#9a9a9a"></div>
<div class="a" style="left:715.5px;top:588.6px;width:82.5px;height:1px;background:#fcfcfc"></div>
<div class="a" style="left:316px;top:588px;width:1px;height:13.5px;background:#9a9a9a"></div>
<div class="a" style="left:314px;top:587px;width:2px;height:15px;background:#fcfcfc"></div>
<div class="a" style="left:715.5px;top:588px;width:1px;height:13.5px;background:#9a9a9a"></div>
<div class="a" style="left:713.5px;top:587px;width:2px;height:15px;background:#fcfcfc"></div>
<div class="t" style="left:2.8px;top:590.6px;font-size:8.5px">Current directory=P:\test\tutorials\fla_tut1</div>
<div class="t" style="left:317.6px;top:590.6px;font-size:8.5px">Current case=[lib]i203</div>
<div class="t" style="left:717.6px;top:590.6px;font-size:7.9px">SPARSOL=On</div>
<div class="a" style="left:0;top:602px;width:800px;height:1px;background:#505050"></div>
<svg class="a" style="left:788px;top:591px" width="11" height="11"><path d="M10 1.5L1.5 10M10 5L5 10M10 8.5L8.5 10" stroke="#303030" stroke-width=".9" stroke-dasharray="1 .8"/></svg>
</body></html>
